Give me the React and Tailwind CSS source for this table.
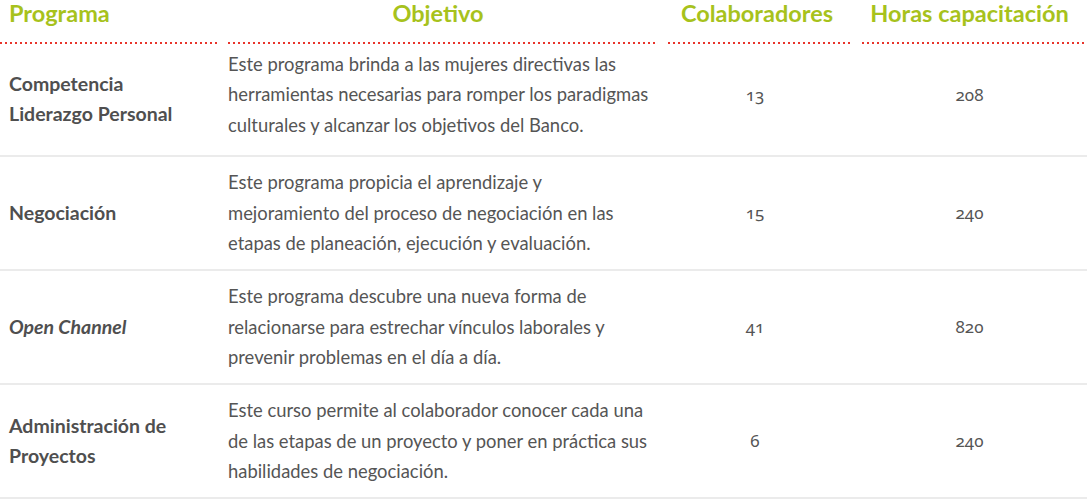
const rows = [
  {
    name: ['Competencia', 'Liderazgo Personal'],
    lines: [
      'Este programa brinda a las mujeres directivas las',
      'herramientas necesarias para romper los paradigmas',
      'culturales y alcanzar los objetivos del Banco.',
    ],
    colab: '13',
    horas: '208',
  },
  {
    name: ['Negociación'],
    lines: [
      'Este programa propicia el aprendizaje y',
      'mejoramiento del proceso de negociación en las',
      'etapas de planeación, ejecución y evaluación.',
    ],
    colab: '15',
    horas: '240',
  },
  {
    name: ['Open Channel'],
    italic: true,
    lines: [
      'Este programa descubre una nueva forma de',
      'relacionarse para estrechar vínculos laborales y',
      'prevenir problemas en el día a día.',
    ],
    colab: '41',
    horas: '820',
  },
  {
    name: ['Administración de', 'Proyectos'],
    lines: [
      'Este curso permite al colaborador conocer cada una',
      'de las etapas de un proyecto y poner en práctica sus',
      'habilidades de negociación.',
    ],
    colab: '6',
    horas: '240',
  },
]

const dots =
  'h-[2px] w-full bg-[linear-gradient(to_right,#e8342b_2px,transparent_2px)] bg-[length:5px_2px] bg-repeat-x'

export default function App() {
  return (
    <div className="w-[1087px] h-[501px] bg-white font-['Lato','Liberation_Sans',sans-serif] overflow-hidden">
      {/* HEADER */}
      <div className="grid grid-cols-[218px_430px_184px_1fr] gap-x-[10px] h-[44px]">
        <div className="flex flex-col justify-between">
          <span className="pl-[9px] text-[23.5px] leading-[26px] font-bold text-[#a7c21c]">Programa</span>
          <div className={dots} />
        </div>
        <div className="flex flex-col justify-between">
          <span className="text-center pr-[10px] text-[23.5px] leading-[26px] font-bold text-[#a7c21c]">Objetivo</span>
          <div className={dots} />
        </div>
        <div className="flex flex-col justify-between">
          <span className="text-center pr-[6px] text-[23.5px] leading-[26px] font-bold text-[#a7c21c]">Colaboradores</span>
          <div className={dots} />
        </div>
        <div className="flex flex-col justify-between">
          <span className="text-center pr-[10px] text-[23.5px] leading-[26px] font-bold text-[#a7c21c] whitespace-nowrap">Horas capacitación</span>
          <div className={dots} />
        </div>
      </div>

      {/* ROWS */}
      {rows.map((r, i) => (
        <div
          key={i}
          className={`grid grid-cols-[218px_430px_184px_1fr] gap-x-[10px] items-center border-b-2 border-[#ebebeb] ${
            i === 0 ? 'h-[113px] pb-[10px]' : 'h-[114px]'
          }`}
        >
          <div
            className={`pl-[9px] text-[19.5px] leading-[30px] font-bold text-[#4f4f4f] whitespace-nowrap ${
              r.italic ? 'italic' : ''
            } ${i === 0 ? 'mt-[8px]' : ''}`}
          >
            {r.name.map((n) => (
              <div key={n}>{n}</div>
            ))}
          </div>
          <div className="text-[18.4px] leading-[30.5px] text-[#555555] whitespace-nowrap">
            {r.lines.map((l) => (
              <div key={l}>{l}</div>
            ))}
          </div>
          <div className="text-center pr-[10px] text-[17px] text-[#555555] font-['Noto_Sans',sans-serif] oldstyle-nums">
            {r.colab}
          </div>
          <div className="text-center pr-[10px] text-[17px] text-[#555555] font-['Noto_Sans',sans-serif] oldstyle-nums">
            {r.horas}
          </div>
        </div>
      ))}
    </div>
  )
}
